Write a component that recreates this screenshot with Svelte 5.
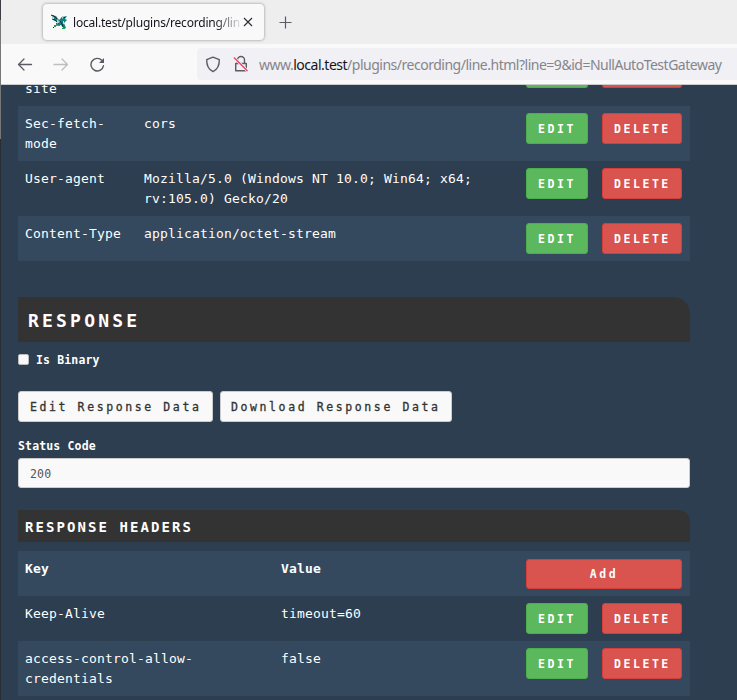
<script>
  const requestHeaders = [
    { lines: ['Sec-fetch-', 'mode'], value: ['cors'] },
    { lines: ['User-agent'], value: ['Mozilla/5.0 (Windows NT 10.0; Win64; x64;', 'rv:105.0) Gecko/20'] },
    { lines: ['Content-Type'], value: ['application/octet-stream'], short: true }
  ];
  const responseHeaders = [
    { lines: ['Keep-Alive'], value: ['timeout=60'], short: true },
    { lines: ['access-control-allow-', 'credentials'], value: ['false'] }
  ];
</script>

{#snippet row(item, odd)}
  <div class="row" class:odd class:short={item.short}>
    <div class="key">{#each item.lines as line}<div>{line}</div>{/each}</div>
    <div class="value">{#each item.value as line}<div>{line}</div>{/each}</div>
    <div class="actions">
      <button class="btn green">EDIT</button>
      <button class="btn red">DELETE</button>
    </div>
  </div>
{/snippet}

<div class="window">
  <div class="edge"></div>
  <div class="main">
    <div class="tabs">
      <div class="tab">
        <svg class="favicon" width="17" height="17" viewBox="0 0 17 17">
          <path d="M0 1l5 1 3 4 3-3 5-1-2 3 2 1-3 3 2 5-2 1-3-4-5 1 1-4-4-2 1-2z" fill="#138080" />
          <path d="M0 1l3 1 3 3M1 5l3 1 2 2M10 4l2-1M9 7l2 3 1 3M5 10l3-1" stroke="#173238" fill="none" />
          <path d="M6 5l3 3-3 2zM10 3h2v2M1 3h2v1H1zM12 7h1v3h-1z" fill="#c5cece" />
          <path d="M3 11h2v2H3zM7 11h2v1H7zM11 14h3v1h-3z" fill="#23a447" />
          <path d="M2 13h1v1H2zM13 3h1v1h-1z" fill="#222" />
        </svg>
        <span class="title">local.test/plugins/recording/lin</span>
        <svg class="close" width="10" height="10" viewBox="0 0 10 10"><path d="M1 1l8 8M9 1L1 9" stroke="#2b2a33" stroke-width="1.1" /></svg>
      </div>
      <svg class="plus" width="13" height="13" viewBox="0 0 13 13"><path d="M6.5.5v12M.5 6.5h12" stroke="#5b5b66" stroke-width="1.2" /></svg>
    </div>
    <div class="toolbar">
      <svg class="nav" width="16" height="16" viewBox="0 0 16 16"><path d="M14.500 8.500H1.500M7 3L1.500 8.500 7 14" fill="none" stroke="#5b5b66" stroke-width="1.3" stroke-linecap="round" stroke-linejoin="round" /></svg>
      <svg class="nav" width="16" height="16" viewBox="0 0 16 16"><path d="M1 8.500h13.500M9 3l5.500 5.500L9 14" fill="none" stroke="#bdbdc2" stroke-width="1.3" stroke-linecap="round" stroke-linejoin="round" /></svg>
      <svg class="nav" width="16" height="16" viewBox="0 0 16 16"><path d="M14.500 9.700A6.300 6.300 0 1 1 13 4.500" fill="none" stroke="#5b5b66" stroke-width="1.4" stroke-linecap="round" /><path d="M15 2v5H10z" fill="#5b5b66" /></svg>
      <div class="urlbar">
        <svg class="shield" width="16" height="17" viewBox="0 0 16 17"><path d="M8 1.2l6.3 2.4c.2 5.6-1.6 9.8-6.3 12.1C3.300 13.400 1.500 9.200 1.700 3.600z" fill="none" stroke="#5b5b66" stroke-width="1.4" stroke-linejoin="round" /></svg>
        <svg class="lock" width="16" height="18" viewBox="0 0 16 18"><path d="M4.500 8V5a3.500 3.500 0 0 1 7 0v3M2.700 8.500h10.600v7.300H2.700z" fill="none" stroke="#5b5b66" stroke-width="1.4" stroke-linejoin="round" /><path d="M1 2.500l13.500 13.500" stroke="#f0f0f4" stroke-width="3" /><path d="M1 2.500l13.500 13.500" stroke="#f0406a" stroke-width="1.4" /></svg>
        <span class="url">www.<b>local.test</b>/plugins/recording/line.html?line=9&amp;id=NullAutoTestGateway</span>
      </div>
    </div>
    <div class="page">
      <div class="content">
        <div class="table">
          <div class="row partial">
            <div class="key">site</div>
            <div class="value"></div>
            <div class="actions"><div class="tail green"></div><div class="tail red"></div></div>
          </div>
          {#each requestHeaders as item, i}{@render row(item, i % 2 === 0)}{/each}
        </div>
        <h2>RESPONSE</h2>
        <label class="check"><span class="box"></span><span>Is Binary</span></label>
        <div class="buttons">
          <button class="btn light">Edit Response Data</button>
          <button class="btn light">Download Response Data</button>
        </div>
        <div class="label">Status Code</div>
        <div class="input">200</div>
        <h3>RESPONSE HEADERS</h3>
        <div class="table wide">
          <div class="row odd short head">
            <div class="key">Key</div>
            <div class="value">Value</div>
            <div class="actions"><button class="btn red add">Add</button></div>
          </div>
          {#each responseHeaders as item, i}{@render row(item, i % 2 === 1)}{/each}
        </div>
      </div>
    </div>
  </div>
</div>

<style>
  :global(body) { margin: 0; overflow: hidden; }
  .window { display: flex; width: 737px; height: 700px; overflow: hidden; }
  .edge { width: 1px; background: linear-gradient(#3a3c48 0 20px, #777 20px 139px, #292d36 139px); }
  .main { flex: 1; display: flex; flex-direction: column; min-width: 0; }
  .tabs { height: 44px; background: #eeeeef; display: flex; box-sizing: border-box; padding: 4px 0 0 42px; flex: none; }
  .tab { width: 221px; height: 36px; box-sizing: border-box; background: #f9f9fa; border-radius: 4px; box-shadow: 0 0 3px #888; display: flex; align-items: center; padding: 0 11px 0 8px; }
  .favicon { flex: none; margin-right: 5px; }
  .title { font: 12px/18px "Noto Sans", "Open Sans", sans-serif; letter-spacing: -0.2px; color: #15141a; white-space: nowrap; width: 168px; flex: none; padding-top: 1px; mask-image: linear-gradient(90deg, #000 142px, transparent 170px); }
  .close { margin-left: auto; flex: none; }
  .plus { margin: 12px 0 0 15px; }
  .toolbar { height: 41px; box-sizing: border-box; background: #f9f9fa; border-bottom: 1px solid #ccc; display: flex; align-items: center; padding-left: 16px; gap: 20px; flex: none; }
  .nav { flex: none; }
  .urlbar { margin-left: 72px; flex: 1; height: 32px; background: #f0f0f5; border-radius: 4px 0 0 4px; display: flex; align-items: center; min-width: 0; }
  .shield { margin-left: 8px; flex: none; }
  .lock { margin-left: 12px; flex: none; }
  .url { margin-left: 10px; padding-top: 2px; font: 14px/20px "Noto Sans", "Open Sans", sans-serif; letter-spacing: -0.49px; color: #85858b; white-space: nowrap; }
  .url b { font-weight: 400; color: #15141a; }
  .page { flex: 1; background: #2d3e50; overflow: hidden; min-height: 0; }
  .content { margin: 0 47px 0 17px; color: #fff; font-family: "DejaVu Sans Mono", "Liberation Mono", monospace; font-size: 13px; letter-spacing: 0.175px; }
  .row { display: flex; height: 55px; box-sizing: border-box; padding: 8px 8px 0 7px; line-height: 20.4px; }
  .row.odd { background: #34495e; }
  .row.short { height: 45px; }
  .row.partial { height: 21px; padding-top: 0; }
  .partial .key { margin-top: -6px; }
  .tail { height: 3px; box-sizing: border-box; border: 1px solid; border-top: 0; border-radius: 0 0 3px 3px; }
  .key { width: 119px; flex: none; white-space: nowrap; }
  .wide .key { width: 256px; }
  .value { flex: 1; white-space: nowrap; }
  .actions { width: 156px; display: flex; justify-content: space-between; align-items: flex-start; flex: none; }
  .row:not(.partial):not(.head) .actions { margin-top: -1px; }
  .head { font-weight: 700; }
  .btn { display: block; box-sizing: border-box; height: 30.5px; padding: 0 0 0 11px; margin: 0; text-align: left; border: 1px solid; border-radius: 3px; font: 700 11.5px/30px "DejaVu Sans Mono", monospace; letter-spacing: 2.55px; color: #fff; white-space: nowrap; }
  .green { width: 62px; background: #5cb85c; border-color: #4cae4c; }
  .red { width: 80px; background: #d9534f; border-color: #d43f3a; }
  .add { width: 156px; height: 30px; padding: 0; text-align: center; line-height: 29px; }
  h2 { margin: 36px 0 0; height: 45px; line-height: 48px; background: #333; border-top-right-radius: 17px; padding-left: 10px; font-size: 18px; letter-spacing: 3.2px; }
  .check { display: flex; align-items: center; height: 20px; margin-top: 8px; font-weight: 700; font-size: 11.5px; letter-spacing: 0.15px; }
  .box { width: 11px; height: 11px; box-sizing: border-box; background: #f9f9fa; border: 1px solid #bbb; border-radius: 2px; margin: -2px 7px 0 0; }
  .buttons { display: flex; gap: 7px; margin-top: 21px; }
  .light { color: #333; background: #f9f9f9; border-color: #ccc; font-weight: 400; height: 31px; width: 195px; line-height: 31px; letter-spacing: 2.6px; -webkit-text-stroke: 0.3px #333; }
  .light + .light { width: 232px; padding-left: 10px; }
  .label { margin-top: 13px; height: 20px; line-height: 22px; font-size: 11.5px; letter-spacing: 0.15px; font-weight: 700; }
  .input { margin-top: 3px; height: 30px; line-height: 30px; box-sizing: border-box; padding-left: 11px; background: #f9f9f9; border: 1px solid #ccc; border-radius: 3px; color: #555; font-size: 11.5px; }
  h3 { margin: 22px 0 9px; height: 32px; line-height: 35px; background: #333; border-top-right-radius: 12px; padding-left: 7px; font-size: 14px; letter-spacing: 2.07px; }
</style>
